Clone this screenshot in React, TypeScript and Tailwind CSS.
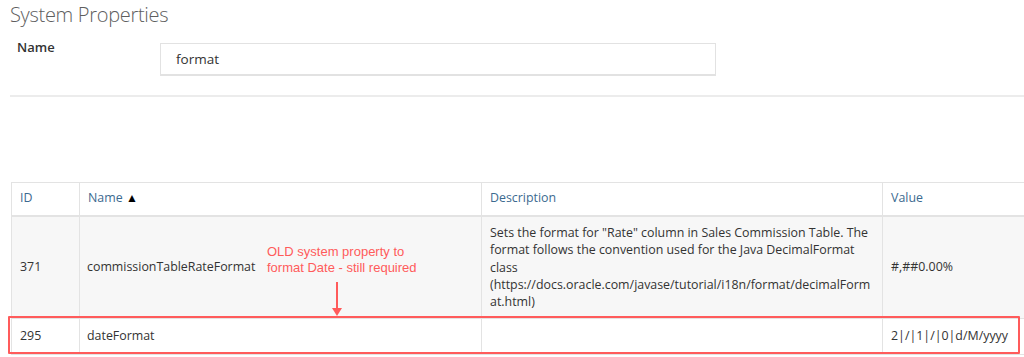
import React from "react";

const border = "border border-[#e3e3e3]";

export default function App() {
  return (
    <div
      className="relative w-[1024px] h-[357px] overflow-hidden bg-white"
      style={{ fontFamily: '"Open Sans", "Liberation Sans", sans-serif' }}
    >
      <div className="px-[10px]">
        <h1 className="text-[20px] font-light text-[#5e5e5e] leading-[28px] pt-[1px] tracking-[-0.3px]">
          System Properties
        </h1>
        <div className="flex items-start mt-[14px]">
          <label className="w-[150px] pl-[7px] text-[13px] font-semibold text-[#333] leading-[18px] -mt-[5px]">
            Name
          </label>
          <div className="w-[556px] h-[33px] border border-[#e2e2e2] border-b-[2px] flex items-center pl-[15px] text-[13.5px] text-[#333]">
            format
          </div>
        </div>
        <div className="mt-[19px] h-[2px] bg-[#ececec] mr-[-10px]" />
      </div>

      <div className="pl-[11px] mt-[85px]">
        <table
          className="border-collapse text-[12.4px] text-[#333] w-[1040px]"
          style={{ tableLayout: "fixed" }}
        >
          <colgroup>
            <col className="w-[68px]" />
            <col className="w-[402px]" />
            <col className="w-[401px]" />
            <col className="w-[169px]" />
          </colgroup>
          <thead>
            <tr className="h-[33px] text-[#3c6a90] text-left">
              <th className={`${border} border-b-2 font-normal pl-[8px]`}>ID</th>
              <th className={`${border} border-b-2 font-normal pl-[8px]`}>
                Name <span className="text-[12px] text-black">▲</span>
              </th>
              <th className={`${border} border-b-2 font-normal pl-[8px]`}>Description</th>
              <th className={`${border} border-b-2 font-normal pl-[8px]`}>Value</th>
            </tr>
          </thead>
          <tbody>
            <tr className="h-[103px] bg-[#f7f7f7]">
              <td className={`${border} pl-[8px]`}>371</td>
              <td className={`${border} pl-[7px]`}>commissionTableRateFormat</td>
              <td className={`${border} pl-[8px] leading-[17.4px] whitespace-nowrap`}>
                Sets the format for "Rate" column in Sales Commission Table. The
                <br />
                format follows the convention used for the Java DecimalFormat
                <br />
                class
                <br />
                (https://docs.oracle.com/javase/tutorial/i18n/format/decimalForm
                <br />
                at.html)
              </td>
              <td className={`${border} pl-[8px]`}>#,##0.00%</td>
            </tr>
            <tr className="h-[36px] bg-white">
              <td className={`${border} pl-[8px]`}>295</td>
              <td className={`${border} pl-[7px]`}>dateFormat</td>
              <td className={border}></td>
              <td className={`${border} pl-[8px]`}>2|/|1|/|0|d/M/yyyy</td>
            </tr>
          </tbody>
        </table>
      </div>

      {/* Annotation overlay */}
      <div
        className="absolute left-[267px] top-[244px] text-[13px] leading-[16px] text-[#ff5b5b]"
        style={{ fontFamily: '"Liberation Sans", Arial, sans-serif' }}
      >
        OLD system property to
        <br />
        format Date - still required
      </div>
      <svg className="absolute left-[331px] top-[281px]" width="12" height="36" viewBox="0 0 12 36">
        <line x1="6" y1="1" x2="6" y2="30" stroke="#ff5b5b" strokeWidth="2" />
        <path d="M1 27 L6 35 L11 27 Z" fill="#ff5b5b" />
      </svg>
      <div className="absolute left-[8px] top-[316px] w-[1012px] h-[38px] border-[2px] border-[#ff5b5b] rounded-[1px]" />
    </div>
  );
}
